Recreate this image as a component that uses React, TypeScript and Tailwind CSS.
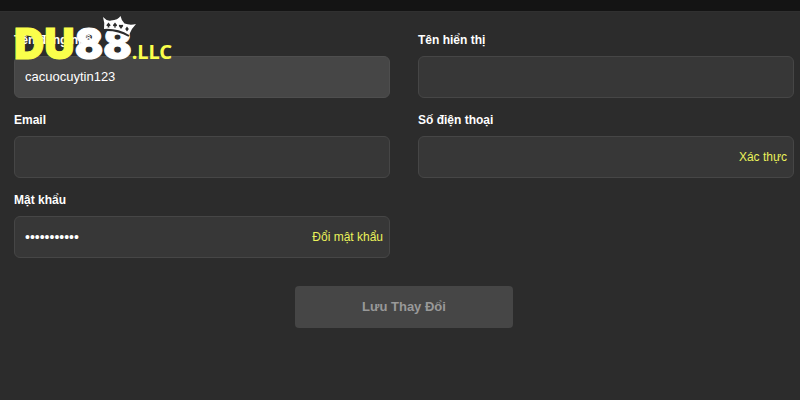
import { useState } from 'react';

interface FieldProps {
  id: string;
  label: string;
  type?: string;
  defaultValue?: string;
  readOnly?: boolean;
  action?: string;
}

function Field({ id, label, type = 'text', defaultValue = '', readOnly = false, action }: FieldProps) {
  const [value, setValue] = useState(defaultValue);

  return (
    <div>
      <label htmlFor={id} className="block mb-2 text-[12px] leading-4 font-bold text-white">
        {label}
      </label>
      <div
        className={`flex items-center h-[42px] rounded-md border pl-[10px] pr-[6px] ${readOnly ? 'bg-[#464646] border-[#4e4e4e]' : 'bg-[#373737] border-[#464646]'}`}
      >
        <input
          id={id}
          type={type}
          value={value}
          readOnly={readOnly}
          onChange={(e) => setValue(e.target.value)}
          className={`flex-1 min-w-0 bg-transparent leading-4 text-white outline-none ${type === 'password' ? 'text-[14px]' : 'text-[13px]'}`}
        />
        {action && (
          <button type="button" className="text-[12px] leading-4 text-[#eaf25a]">
            {action}
          </button>
        )}
      </div>
    </div>
  );
}

function Crown() {
  return (
    <svg viewBox="0 0 36 22" className="absolute left-[88px] -top-3 w-9 h-[22px]" aria-hidden="true">
      <path
        d="M1 1 Q5 5.500 9 4.500 Q16 4 18.500 0 Q19.500 5 22.500 7.500 Q28 9.500 34 8 Q29 13 27 19 Q15 12 2 13 Q3 7 1 1Z"
        fill="#fff"
      />
      <path d="M2 14 Q15 13 27 20" fill="none" stroke="#2c2c2c" strokeWidth="2" />
      <g fill="#2c2c2c">
        <path d="M6.500 6.500l2 2.500q.3 1.500-1.500 1l.5 1.500h-2l.5-1.500q-1.800.5-1.500-1z" />
        <path d="M13 6.500l2 2.500q.3 1.500-1.500 1l.5 1.500h-2l.5-1.500q-1.800.5-1.500-1z" />
        <path d="M19 13l-2.200-3q0-2 2.200-1q2.200-1 2.200 1z" />
        <path d="M25 10.500l1.800 2.500l-1.800 2.500l-1.800-2.500z" />
      </g>
    </svg>
  );
}

function Logo() {
  return (
    <div className="absolute left-[14px] top-4 flex items-baseline text-[#faff4b]">
      <span className="relative font-[Inter,sans-serif] text-[42px] leading-8 font-black [-webkit-text-stroke:1px]">
        DU<span className="text-white">88</span>
        <Crown />
      </span>
      <span className="font-['Noto_Sans',sans-serif] text-[20px] leading-8 font-bold">.LLC</span>
    </div>
  );
}

export default function App() {
  return (
    <div className="min-h-screen bg-[#2c2c2c] font-['Liberation_Sans',Arial,sans-serif]">
      <header className="h-3 bg-[#141414] border-b border-[#303030]" />
      <main className="relative">
        <form onSubmit={(e) => e.preventDefault()} className="pt-5 pl-[14px] pr-[6px]">
          <div className="grid grid-cols-2 gap-x-7 gap-y-[14px]">
            <Field id="username" label="Tên đăng nhập" defaultValue="cacuocuytin123" readOnly />
            <Field id="displayName" label="Tên hiển thị" />
            <Field id="email" label="Email" type="email" />
            <Field id="phone" label="Số điện thoại" type="tel" action="Xác thực" />
            <Field id="password" label="Mật khẩu" type="password" defaultValue="matkhau1234" action="Đổi mật khẩu" />
          </div>
          <div className="flex justify-center mt-7">
            <button
              type="submit"
              disabled
              className="w-[218px] h-[42px] rounded-sm bg-[#464646] text-[13px] leading-5 font-bold text-[#999]"
            >
              Lưu Thay Đổi
            </button>
          </div>
        </form>
        <Logo />
      </main>
    </div>
  );
}
